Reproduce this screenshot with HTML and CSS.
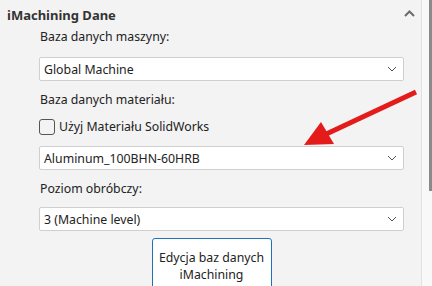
FILE: index.html
```html
<!DOCTYPE html>
<html lang="pl">
<head>
    <meta charset="UTF-8">
    <title>iMachining Dane</title>
    <link rel="stylesheet" href="styles.css">
</head>
<body>
    <div class="window">
        <div class="panel">
            <div class="panel-header">
                <h1>iMachining Dane</h1>
                <svg class="collapse" width="11" height="7" viewBox="0 0 11 7"><path d="M1 6 L5.5 1.5 L10 6" fill="none" stroke="#6b6b6b" stroke-width="2"/></svg>
            </div>
            <div class="panel-body">
                <label class="field-label">Baza danych maszyny:</label>
                <div class="select">
                    <span>Global Machine</span>
                    <svg width="10" height="6" viewBox="0 0 10 6"><path d="M1 1 L5 5 L9 1" fill="none" stroke="#555" stroke-width="1"/></svg>
                </div>
                <label class="field-label">Baza danych materiału:</label>
                <div class="check-row">
                    <span class="checkbox"></span>
                    <span>Użyj Materiału SolidWorks</span>
                </div>
                <div class="select">
                    <span>Aluminum_100BHN-60HRB</span>
                    <svg width="10" height="6" viewBox="0 0 10 6"><path d="M1 1 L5 5 L9 1" fill="none" stroke="#555" stroke-width="1"/></svg>
                </div>
                <label class="field-label">Poziom obróbczy:</label>
                <div class="select">
                    <span>3 (Machine level)</span>
                    <svg width="10" height="6" viewBox="0 0 10 6"><path d="M1 1 L5 5 L9 1" fill="none" stroke="#555" stroke-width="1"/></svg>
                </div>
                <div class="button-row">
                    <button class="db-button">Edycja baz danych<br>iMachining</button>
                </div>
            </div>
            <!-- annotation arrow drawn over the form -->
            <svg class="arrow" width="432" height="286" viewBox="0 0 432 286">
                <line x1="416" y1="92" x2="322" y2="136" stroke="#e31b1b" stroke-width="5"/>
                <polygon points="304,145 321,122 334,144" fill="#e31b1b"/>
            </svg>
        </div>
        <div class="scroll">
            <div class="thumb"></div>
        </div>
    </div>
</body>
</html>
```

FILE: styles.css
```css
body {
    margin: 0;
    padding: 0;
    font-family: "Noto Sans", "Open Sans", sans-serif;
    font-size: 12.3px;
    color: #222;
    background-color: #f3f3f3;
}
.window {
    display: flex;
    width: 432px;
    height: 286px;
    overflow: hidden;
}
.panel {
    position: relative;
    flex: 1;
}
.panel-header {
    display: flex;
    align-items: center;
    justify-content: space-between;
    height: 30px;
    padding: 0 6px 0 7px;
}
.panel-header h1 {
    margin: 0;
    font-size: 13px;
    font-weight: bold;
    color: #333;
}
.collapse {
    margin-top: -4px;
}
.panel-body {
    padding: 0 17px 0 39px;
    display: flex;
    flex-direction: column;
}
.field-label {
    display: block;
    height: 18px;
    line-height: 18px;
    padding-left: 1px;
}
.panel-body > .field-label:first-child {
    margin-top: -2px;
    margin-bottom: 11px;
}
.select {
    display: flex;
    align-items: center;
    justify-content: space-between;
    height: 24px;
    box-sizing: border-box;
    background-color: #fff;
    border: 1px solid #cfcfcf;
    border-radius: 2px;
    padding: 0 6px 0 4px;
}
.select + .field-label {
    margin-top: 10px;
    margin-bottom: 9px;
}
.check-row {
    display: flex;
    align-items: center;
    gap: 4px;
    height: 17px;
    margin-bottom: 11px;
}
.checkbox {
    width: 14px;
    height: 14px;
    border: 1px solid #555;
    border-radius: 3px;
    background-color: #f3f3f3;
}
.button-row {
    display: flex;
    justify-content: center;
    padding-top: 7px;
    padding-right: 20px;
}
.db-button {
    width: 120px;
    padding: 10px 0 20px;
    font-family: inherit;
    font-size: 12.3px;
    line-height: 17px;
    color: #222;
    background-color: #fff;
    border: 1px solid #1f72b8;
    border-radius: 3px;
}
.arrow {
    position: absolute;
    left: 0;
    top: 0;
    pointer-events: none;
}
.scroll {
    width: 10px;
    background-color: #f8f8f8;
    border-left: 1px solid #e2e2e2;
}
.thumb {
    width: 3px;
    height: 191px;
    margin-left: 7px;
    background-color: #8a8a8a;
}
```
